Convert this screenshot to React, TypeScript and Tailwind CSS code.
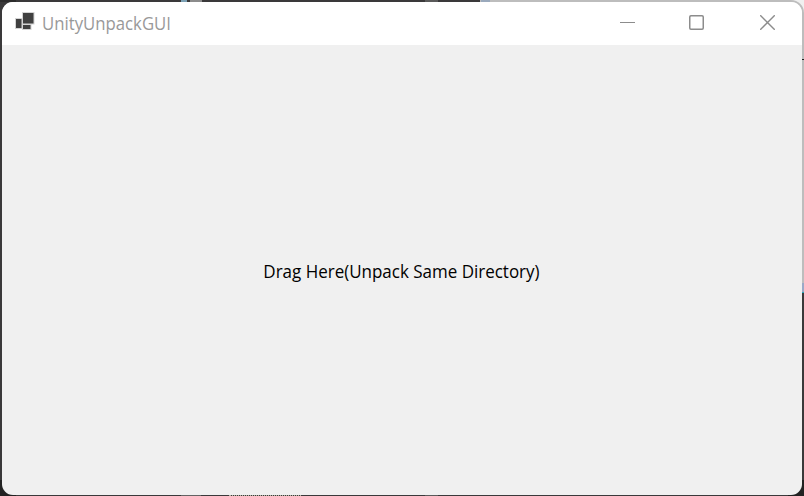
function AppIcon() {
  return (
    <svg className="block shrink-0" width="20" height="19" viewBox="0 0 20 19">
      <g fill="#404040" stroke="#d4d4d4" strokeWidth="1">
        <rect x="0.5" y="6.5" width="6.5" height="10" />
        <rect x="7.5" y="12.5" width="8.5" height="5" />
        <rect x="7.5" y="0.5" width="11.5" height="11.5" />
      </g>
    </svg>
  );
}

function Backdrop() {
  return (
    <div className="col-start-1 row-start-1 flex flex-col justify-between bg-[#3a393a]">
      <div className="flex h-[293px]">
        <div className="flex h-0.5 w-[480px]">
          <span className="mr-[165px] w-4 bg-[#2c2c2c]" />
          <span className="mr-[3px] w-1.5 bg-[#7ba0b4]" />
          <span className="mr-[223px] w-3 bg-[#8c8c8c]" />
          <span className="w-[13px] bg-[#5a5a5a]" />
        </div>
        <div className="flex flex-1 justify-between bg-[#f0f0f0]">
          <div className="flex flex-1 justify-between rounded-tr-[13px] bg-[#bdbdbd]">
            <span className="ml-px h-0.5 w-[9px] bg-[#9aa9bc]" />
            <div className="flex w-0.5 flex-col justify-end">
              <span className="mb-[223px] h-px bg-[#222222]" />
              <span className="h-[9px] bg-[#9aa9c8]" />
              <span className="h-px bg-[#28a8b8]" />
            </div>
          </div>
        </div>
      </div>
      <div className="flex h-4 items-end">
        <span className="mr-[165px] h-4 w-4 bg-[#222222]" />
        <span className="mr-7 h-px w-5 bg-[#636363]" />
        <span className="mr-[124px] h-px w-[72px] border-t border-dotted border-[#b5b5a5]" />
        <span className="h-px w-[13px] bg-[#5a5a5a]" />
        <span className="ml-auto h-4 w-4 bg-[#222222]" />
      </div>
    </div>
  );
}

function WindowControls() {
  return (
    <div className="ml-auto flex h-full items-start pt-[13px] pr-[27px] text-[#8c8c8c]">
      <svg className="mr-[54px] block" width="15" height="15" viewBox="0 0 15 15">
        <path d="M0 7.5H15" stroke="currentColor" />
      </svg>
      <svg className="mr-[56px] block" width="15" height="15" viewBox="0 0 15 15" fill="none">
        <rect x="0.75" y="0.75" width="13.5" height="13.5" rx="1.2" stroke="currentColor" strokeWidth="1.5" />
      </svg>
      <svg className="block" width="15" height="15" viewBox="0 0 15 15">
        <path d="M0.2 0.2L14.8 14.8M14.8 0.2L0.2 14.8" stroke="currentColor" strokeWidth="1.4" />
      </svg>
    </div>
  );
}

export default function App() {
  return (
    <div className="grid h-[496px] w-[804px] grid-cols-1 grid-rows-1 overflow-hidden font-['Open_Sans','Noto_Sans',sans-serif]">
      <Backdrop />
      <div className="col-start-1 row-start-1 pt-0.5 pr-0.5 pb-px pl-0.5">
        <main className="flex h-full flex-col overflow-hidden rounded-[11px] bg-[#f0f0f0]">
          <header className="flex h-[43px] shrink-0 items-start bg-white">
            <div className="pt-[10px] pl-[13px]">
              <AppIcon />
            </div>
            <h1 className="mt-[9px] ml-[7px] origin-left scale-x-[0.93] text-[18px] leading-6 whitespace-nowrap text-[#999999]">
              UnityUnpackGUI
            </h1>
            <WindowControls />
          </header>
          <section className="flex flex-1 items-center justify-center pt-0.5 pr-px">
            <p className="scale-x-[0.943] text-[18px] leading-6 whitespace-nowrap text-black">
              Drag Here(Unpack Same Directory)
            </p>
          </section>
        </main>
      </div>
    </div>
  );
}
